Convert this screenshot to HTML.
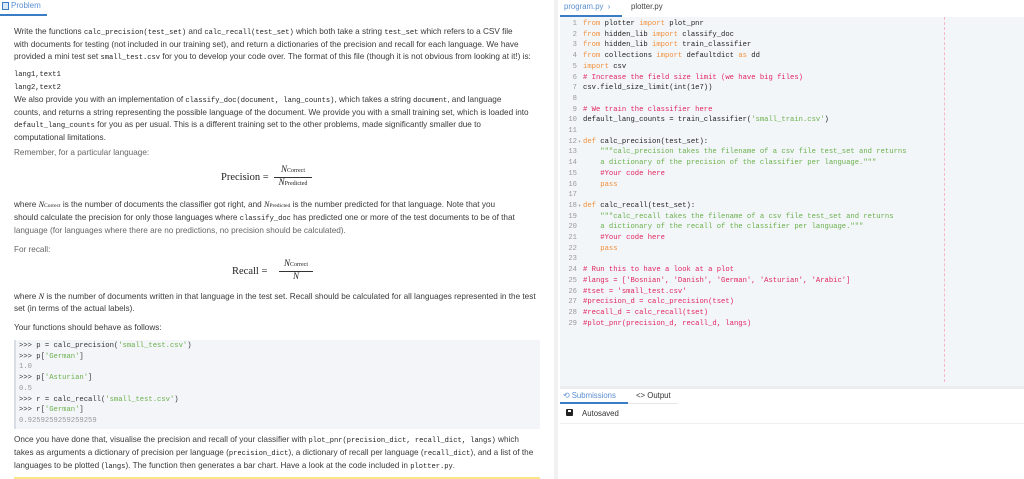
<!DOCTYPE html>
<html><head><meta charset="utf-8"><style>
*{margin:0;padding:0;box-sizing:border-box}
body{width:1024px;height:479px;overflow:hidden;background:#fff;font-family:"Liberation Sans",sans-serif;color:#333;position:relative}
.a{position:absolute;white-space:nowrap}
.t{font-size:8.2px;line-height:12px;color:#3a3a3a}
.g{color:#666}
code,.m{font-family:"Liberation Mono",monospace;font-size:7.1px;color:#222}
.ser{font-family:"Liberation Serif",serif;color:#222}
.code{position:absolute;font-family:"Liberation Mono",monospace;font-size:7.2px;line-height:10.7px;white-space:pre;color:#222}
.k{color:#f0903c}.c{color:#e0245e}.s{color:#6ab04c}.n{color:#999}
</style></head><body>
<div class="a" style="left:0;top:0;width:47px;height:16px;border-bottom:2px solid #3b7dc4"></div>
<div class="a" style="left:2px;top:2px;width:7px;height:8px;border:1px solid #3b7dc4;background:#dbe8f6"></div>
<div class="a" style="left:11px;top:0;font-size:8px;line-height:12px;color:#5b8fd0">Problem</div>

<div class="a t" style="left:14px;top:26px">Write the functions <code>calc_precision(test_set)</code> and <code>calc_recall(test_set)</code> which both take a string <code>test_set</code> which refers to a CSV file<br>with documents for testing (not included in our training set), and return a dictionaries of the precision and recall for each language. We have<br>provided a mini test set <code>small_test.csv</code> for you to develop your code over. The format of this file (though it is not obvious from looking at it!) is:</div>
<div class="a t" style="left:14px;top:68px"><span class="m g">lang1,text1</span><br><span class="m g">lang2,text2</span><br>We also provide you with an implementation of <code>classify_doc(document, lang_counts)</code>, which takes a string <code>document</code>, and language<br>counts, and returns a string representing the possible language of the document. We provide you with a small training set, which is loaded into<br><code>default_lang_counts</code> for you as per usual. This is a different training set to the other problems, made significantly smaller due to<br>computational limitations.</div>
<div class="a t g" style="left:14px;top:147px">Remember, for a particular language:</div>
<div class="a ser" style="left:221px;top:172px;font-size:10.5px">Precision =</div>
<div class="a ser" style="left:274px;top:164px;width:38px;text-align:center;font-size:9px;font-style:italic;border-bottom:0.8px solid #333;line-height:11px">N<span style="font-size:6px;font-style:normal">Correct</span></div>
<div class="a ser" style="left:272px;top:177px;width:42px;text-align:center;font-size:9px;font-style:italic;line-height:11px">N<span style="font-size:6px;font-style:normal">Predicted</span></div>
<div class="a t" style="left:14px;top:199px">where <i class="ser">N</i><span class="ser" style="font-size:5.5px">Correct</span> is the number of documents the classifier got right, and <i class="ser">N</i><span class="ser" style="font-size:5.5px">Predicted</span> is the number predicted for that language. Note that you<br>should calculate the precision for only those languages where <code>classify_doc</code> has predicted one or more of the test documents to be of that<br><span class="g">language (for languages where there are no predictions, no precision should be calculated).</span></div>
<div class="a t g" style="left:14px;top:244px">For recall:</div>
<div class="a ser" style="left:232px;top:266px;font-size:10.5px">Recall =</div>
<div class="a ser" style="left:279px;top:258px;width:34px;text-align:center;font-size:9px;font-style:italic;border-bottom:0.8px solid #333;line-height:11px">N<span style="font-size:6px;font-style:normal">Correct</span></div>
<div class="a ser" style="left:279px;top:271px;width:34px;text-align:center;font-size:9px;font-style:italic;line-height:11px">N</div>
<div class="a t" style="left:14px;top:291px">where <i class="ser">N</i> is the number of documents written in that language in the test set. Recall should be calculated for all languages represented in the test<br>set (in terms of the actual labels).</div>
<div class="a t" style="left:14px;top:322px">Your functions should behave as follows:</div>
<div class="a" style="left:14px;top:340px;width:526px;height:89px;background:#f3f5f8;border-left:2px solid #d8dde3"></div>
<div class="code" style="left:19px;top:341px;font-size:7.2px;line-height:10.7px;color:#333">&gt;&gt;&gt; p = calc_precision(<span class="s">'small_test.csv'</span>)
&gt;&gt;&gt; p[<span class="s">'German'</span>]
<span class="n">1.0</span>
&gt;&gt;&gt; p[<span class="s">'Asturian'</span>]
<span class="n">0.5</span>
&gt;&gt;&gt; r = calc_recall(<span class="s">'small_test.csv'</span>)
&gt;&gt;&gt; r[<span class="s">'German'</span>]
<span class="n">0.9259259259259259</span></div>
<div class="a t" style="left:14px;top:434px">Once you have done that, visualise the precision and recall of your classifier with <code>plot_pnr(precision_dict, recall_dict, langs)</code> which<br>takes as arguments a dictionary of precision per language (<code>precision_dict</code>), a dictionary of recall per language (<code>recall_dict</code>), and a list of the<br>languages to be plotted (<code>langs</code>). The function then generates a bar chart. Have a look at the code included in <code>plotter.py</code>.</div>
<div class="a" style="left:14px;top:477px;width:526px;height:2px;background:#fde58a"></div>

<div class="a" style="left:554px;top:0;width:4px;height:479px;background:#f1f1f1"></div>

<div class="a" style="left:560px;top:0;width:464px;height:17px;background:#fff"></div>
<div class="a" style="left:564px;top:1px;font-size:7.8px;line-height:12px;color:#5b8fd0">program.py &nbsp;›</div>
<div class="a" style="left:560px;top:15px;width:62px;height:2px;background:#3b7dc4"></div>
<div class="a" style="left:631px;top:1px;font-size:7.8px;line-height:12px;color:#444">plotter.py</div>
<div class="a" style="left:560px;top:17px;width:464px;height:369px;background:#f3f6f9"></div>
<div class="a" style="left:560px;top:386px;width:464px;height:3px;background:#ececec"></div>
<div class="a" style="left:944px;top:17px;width:0;height:365px;border-left:1px dashed #f5b8c8"></div>
<div class="code n" style="left:561px;top:19px;width:16px;text-align:right">1
2
3
4
5
6
7
8
9
10
11
12
13
14
15
16
17
18
19
20
21
22
23
24
25
26
27
28
29</div>
<div class="code n" style="left:578px;top:19px;font-size:5px"><br><br><br><br><br><br><br><br><br><br><br>▾<br><br><br><br><br><br>▾</div>
<div class="code" style="left:583px;top:19px"><span class="k">from</span> plotter <span class="k">import</span> plot_pnr
<span class="k">from</span> hidden_lib <span class="k">import</span> classify_doc
<span class="k">from</span> hidden_lib <span class="k">import</span> train_classifier
<span class="k">from</span> collections <span class="k">import</span> defaultdict <span class="k">as</span> dd
<span class="k">import</span> csv
<span class="c"># Increase the field size limit (we have big files)</span>
csv.field_size_limit(int(1e7))

<span class="c"># We train the classifier here</span>
default_lang_counts = train_classifier(<span class="s">'small_train.csv'</span>)

<span class="k">def</span> calc_precision(test_set):
    <span class="s">"""calc_precision takes the filename of a csv file test_set and returns
    a dictionary of the precision of the classifier per language."""</span>
    <span class="c">#Your code here</span>
    <span class="k">pass</span>

<span class="k">def</span> calc_recall(test_set):
    <span class="s">"""calc_recall takes the filename of a csv file test_set and returns
    a dictionary of the recall of the classifier per language."""</span>
    <span class="c">#Your code here</span>
    <span class="k">pass</span>

<span class="c"># Run this to have a look at a plot</span>
<span class="c">#langs = ['Bosnian', 'Danish', 'German', 'Asturian', 'Arabic']</span>
<span class="c">#tset = 'small_test.csv'</span>
<span class="c">#precision_d = calc_precision(tset)</span>
<span class="c">#recall_d = calc_recall(tset)</span>
<span class="c">#plot_pnr(precision_d, recall_d, langs)</span></div>

<div class="a" style="left:563px;top:390px;font-size:7.8px;line-height:12px;color:#5b8fd0">⟲ Submissions</div>
<div class="a" style="left:636px;top:390px;font-size:7.8px;line-height:12px;color:#333">&lt;&gt; Output</div>
<div class="a" style="left:560px;top:403px;width:118px;height:1px;background:#e6e6e6"></div>
<div class="a" style="left:560px;top:402px;width:68px;height:2px;background:#3b7dc4"></div>
<div class="a" style="left:566px;top:409px;width:7px;height:7px;background:#222;border-radius:1px"></div>
<div class="a" style="left:568px;top:410px;width:3px;height:2px;background:#fff"></div>
<div class="a" style="left:582px;top:408px;font-size:7.8px;line-height:12px;color:#333">Autosaved</div>
<div class="a" style="left:560px;top:423px;width:464px;height:1px;background:#f0f0f0"></div>
</body></html>
